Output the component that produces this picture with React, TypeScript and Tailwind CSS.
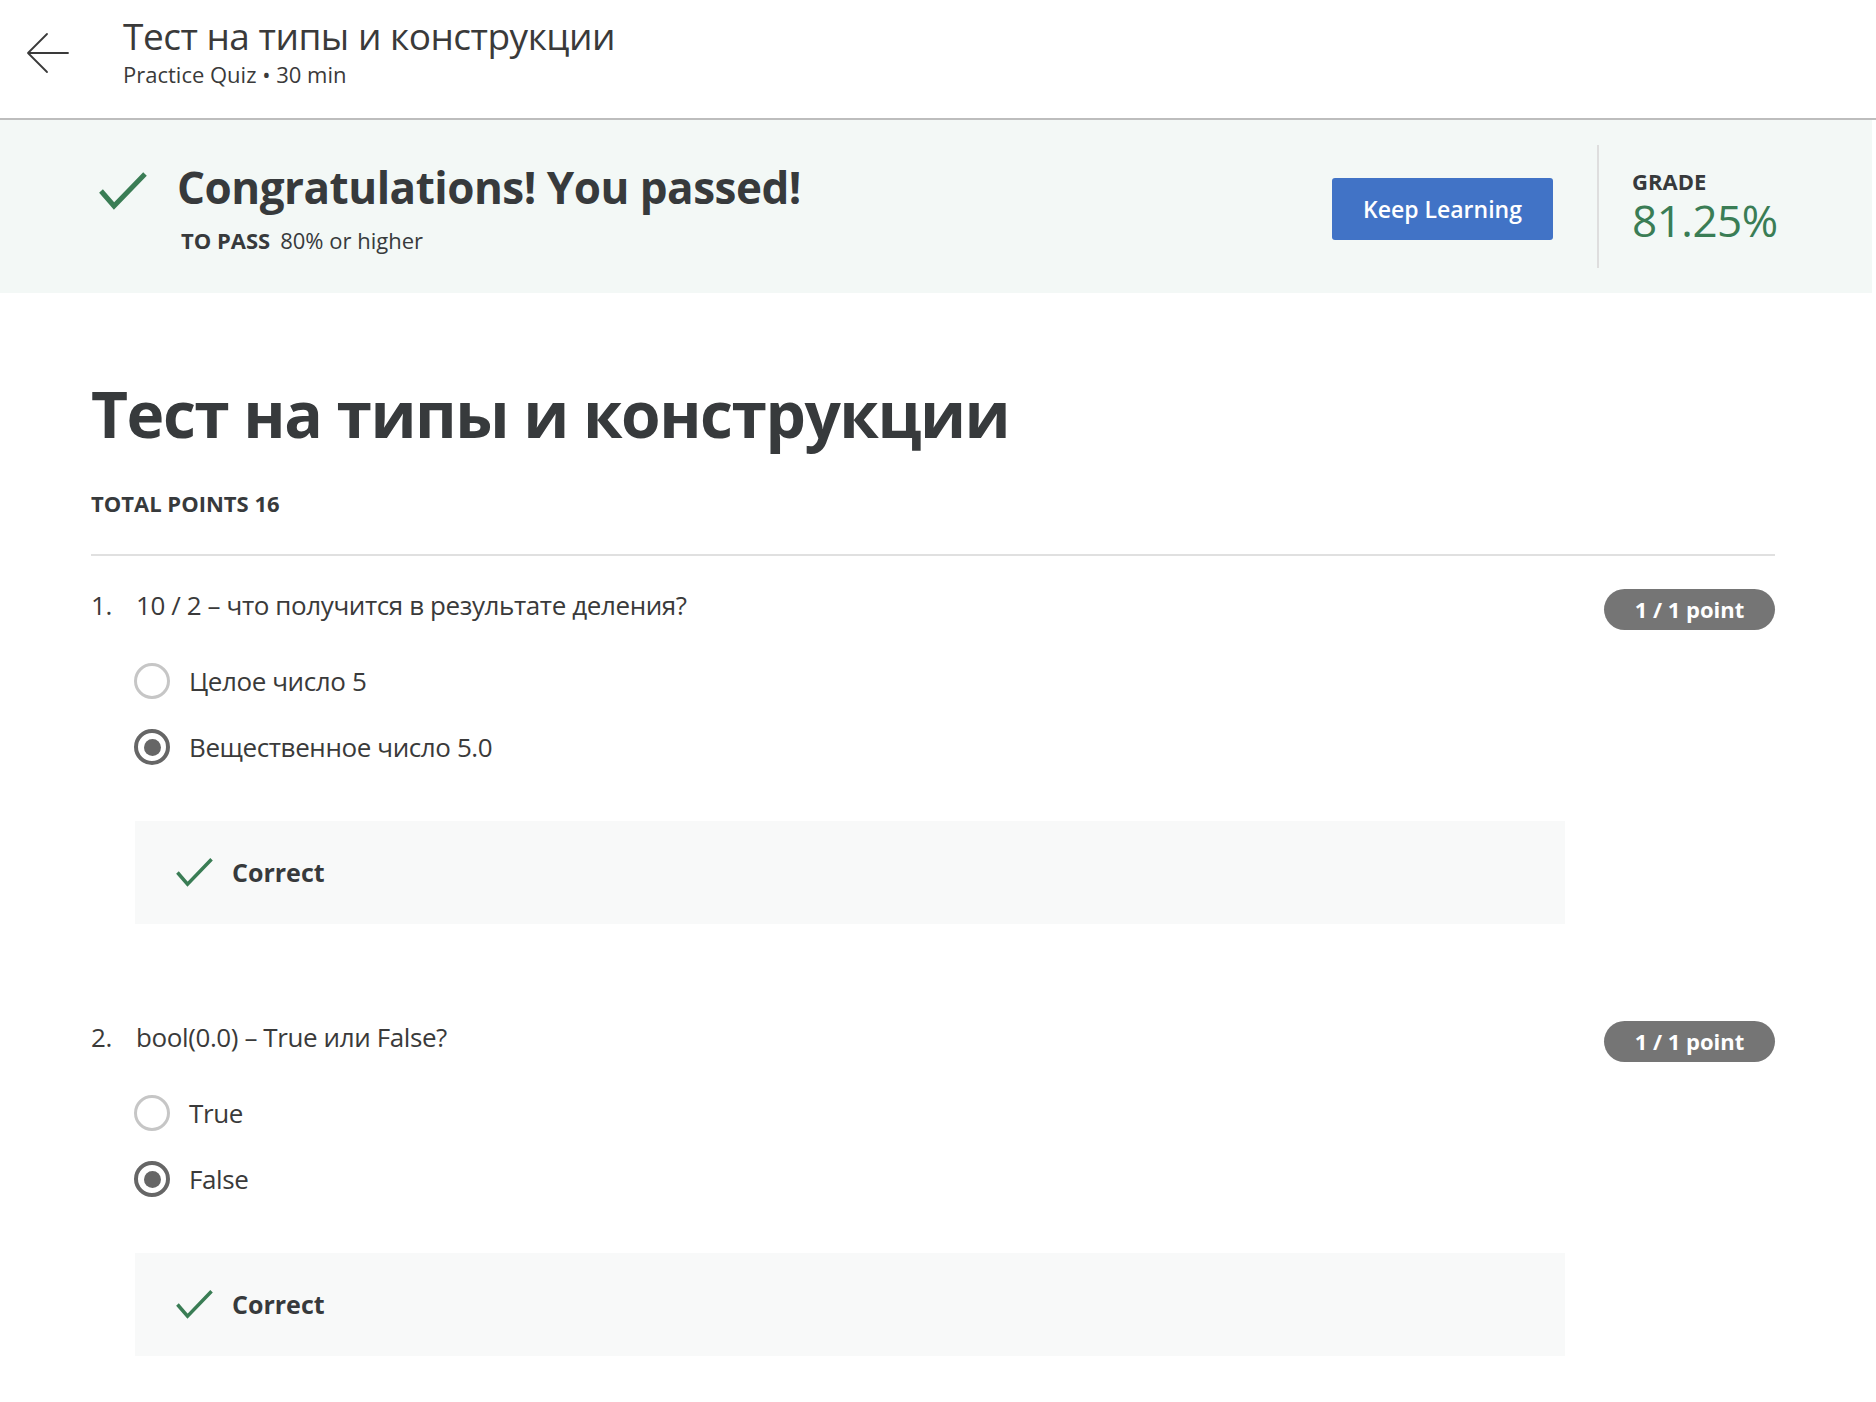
import React from "react";

const font = { fontFamily: '"Open Sans", "Noto Sans", sans-serif' };

function BackArrow() {
  return (
    <svg width="44" height="44" viewBox="0 0 44 44" fill="none" stroke="#3a3a3a" strokeWidth="1.8" strokeLinecap="round" strokeLinejoin="round">
      <path d="M42 22 H3" />
      <path d="M21 3 L2 22 L21 41" />
    </svg>
  );
}

function Check({ w, h, sw }: { w: number; h: number; sw: number }) {
  return (
    <svg width={w} height={h} viewBox="0 0 50 40" fill="none" stroke="#3a7d55" strokeWidth={sw} strokeLinecap="butt" strokeLinejoin="miter">
      <path d="M3 20 L16 35 L47 3" />
    </svg>
  );
}

function Radio({ checked }: { checked: boolean }) {
  if (checked) {
    return (
      <div className="w-[36px] h-[36px] rounded-full border-[4px] border-[#666666] flex items-center justify-center shrink-0">
        <div className="w-[17px] h-[17px] rounded-full bg-[#666666]" />
      </div>
    );
  }
  return <div className="w-[36px] h-[36px] rounded-full border-[3px] border-[#c6c6c6] shrink-0" />;
}

function Question({
  num,
  text,
  options,
  selected,
  first,
}: {
  num: string;
  text: string;
  options: string[];
  selected: number;
  first?: boolean;
}) {
  return (
    <div className={first ? "mt-[31px]" : "mt-[95px]"}>
      <div className="flex items-start justify-between">
        <div className="flex text-[26px] leading-[36px] tracking-[-0.4px] text-[#3a3a3a]">
          <span className="w-[45px]">{num}</span>
          <span>{text}</span>
        </div>
        <div className="mt-[2px] w-[171px] h-[41px] rounded-full bg-[#757575] text-white text-[22px] font-bold flex items-center justify-center">
          1 / 1 point
        </div>
      </div>
      <div className="mt-[33px] ml-[43px] flex flex-col gap-[30px]">
        {options.map((o, i) => (
          <div key={i} className="flex items-center gap-[19px] h-[36px]">
            <Radio checked={i === selected} />
            <span className="text-[26px] leading-[36px] tracking-[-0.4px] text-[#3a3a3a]">{o}</span>
          </div>
        ))}
      </div>
      <div className="mt-[56px] ml-[44px] w-[1430px] h-[103px] bg-[#f8f9f9] flex items-center pl-[40px]">
        <Check w={39} h={31} sw={4.5} />
        <span className="ml-[18px] text-[25px] font-bold text-[#373a3c]">Correct</span>
      </div>
    </div>
  );
}

export default function App() {
  return (
    <div className="w-[1876px] min-h-[1402px] bg-white" style={font}>
      {/* Header */}
      <div className="h-[120px] flex items-start border-b-2 border-[#bdbdbd]">
        <div className="ml-[26px] w-[97px] mt-[31px]">
          <BackArrow />
        </div>
        <div className="flex flex-col pt-[13px]">
          <span className="text-[37px] leading-[46px] tracking-[-0.5px] text-[#3a3a3a]">Тест на типы и конструкции</span>
          <span className="text-[22px] leading-[28px] text-[#3a3a3a] mt-[1px]">Practice Quiz • 30 min</span>
        </div>
      </div>

      {/* Banner */}
      <div className="w-[1872px] h-[173px] bg-[#f3f8f6] flex">
        <div className="flex-1 flex items-start pl-[98px] pt-[41px]">
          <div className="mt-[10px]">
            <Check w={50} h={40} sw={5} />
          </div>
          <div className="ml-[29px] flex flex-col">
            <span className="text-[44px] leading-[52px] tracking-[-0.5px] font-bold text-[#373a3c]">Congratulations! You passed!</span>
            <div className="mt-[13px] ml-[4px] text-[22px] leading-[28px] text-[#373a3c]">
              <span className="font-bold">TO PASS</span>
              <span className="ml-[10px]">80% or higher</span>
            </div>
          </div>
        </div>
        <div className="flex items-stretch py-[25px] pr-[40px]">
          <div className="flex items-center">
            <button className="mt-[5px] w-[221px] h-[62px] rounded-[3px] bg-[#4173c6] text-white text-[23px] font-semibold">
              Keep Learning
            </button>
          </div>
          <div className="ml-[44px] w-[2px] bg-[#dedede]" />
          <div className="ml-[33px] w-[200px] pt-[22px] flex flex-col">
            <span className="text-[22px] leading-[28px] font-bold text-[#373a3c]">GRADE</span>
            <span className="text-[44px] leading-[50px] tracking-[-0.5px] text-[#3a7d55]">81.25%</span>
          </div>
        </div>
      </div>

      {/* Content */}
      <div className="ml-[91px] w-[1684px] pb-[80px]">
        <h1 className="pt-[81px] text-[64px] leading-[80px] tracking-[-1.5px] font-bold text-[#373a3c]">Тест на типы и конструкции</h1>
        <div className="mt-[35px] text-[22px] leading-[28px] font-bold text-[#373a3c]">TOTAL POINTS 16</div>
        <div className="mt-[37px] h-[2px] bg-[#e0e0e0]" />
        <Question
          first
          num="1."
          text="10 / 2 – что получится в результате деления?"
          options={["Целое число 5", "Вещественное число 5.0"]}
          selected={1}
        />
        <Question
          num="2."
          text="bool(0.0) – True или False?"
          options={["True", "False"]}
          selected={1}
        />
      </div>
    </div>
  );
}
